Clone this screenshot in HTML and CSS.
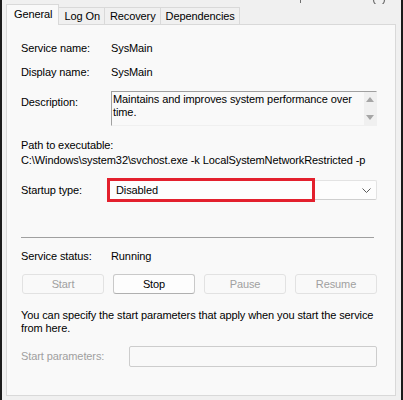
FILE: index.html
```html
<!DOCTYPE html>
<html lang="en">
<head>
    <meta charset="UTF-8">
    <title>SysMain Properties</title>
    <link rel="stylesheet" href="styles.css">
</head>
<body>
    <div class="window">
        <!-- cut off title bar buttons -->
        <svg class="chrome" width="403" height="4" viewBox="0 0 403 4">
            <path d="M300.5 0 V3" stroke="#707070" stroke-width="1" fill="none"/>
            <path d="M373.5 0 A5.5 5.5 0 0 0 384.5 0" stroke="#707070" stroke-width="1.2" fill="none"/>
        </svg>

        <div class="tabs">
            <div class="tab active">General</div>
            <div class="tab">Log On</div>
            <div class="tab">Recovery</div>
            <div class="tab">Dependencies</div>
        </div>

        <div class="panel">
            <div class="row">
                <span class="label">Service name:</span>
                <span>SysMain</span>
            </div>
            <div class="row display">
                <span class="label">Display name:</span>
                <span>SysMain</span>
            </div>
            <div class="row desc-row">
                <span class="label">Description:</span>
                <div class="desc-box">
                    <p>Maintains and improves system performance over time.</p>
                    <div class="scroll">
                        <svg width="8" height="5" viewBox="0 0 8 5"><path d="M0 5 L4 0 L8 5 Z" fill="#a6a6a6"/></svg>
                        <svg width="8" height="5" viewBox="0 0 8 5"><path d="M0 0 L4 5 L8 0 Z" fill="#a6a6a6"/></svg>
                    </div>
                </div>
            </div>

            <div class="path">
                <div>Path to executable:</div>
                <div class="path-value">C:\Windows\system32\svchost.exe -k LocalSystemNetworkRestricted -p</div>
            </div>

            <div class="row startup">
                <span class="label">Startup type:</span>
                <div class="select">
                    <span>Disabled</span>
                    <svg width="9" height="5" viewBox="0 0 9 5"><path d="M0.5 0.5 L4.5 4.5 L8.5 0.5" stroke="#5a5a5a" fill="none"/></svg>
                    <div class="highlight"></div>
                </div>
            </div>

            <div class="sep"></div>

            <div class="row status">
                <span class="label">Service status:</span>
                <span>Running</span>
            </div>

            <div class="buttons">
                <button disabled>Start</button>
                <button>Stop</button>
                <button disabled>Pause</button>
                <button disabled>Resume</button>
            </div>

            <p class="note">You can specify the start parameters that apply when you start the service from here.</p>

            <div class="row params">
                <span class="label muted">Start parameters:</span>
                <div class="input"></div>
            </div>
        </div>
    </div>
</body>
</html>
```

FILE: styles.css
```css
body {
    margin: 0;
    font-family: "Liberation Sans", Arial, sans-serif;
    font-size: 11px;
    line-height: 13px;
    letter-spacing: -0.1px;
    color: #000000;
    background-color: #f0f0f0;
}

.window {
    position: relative;
    height: 400px;
    box-sizing: border-box;
    border-left: 2px solid #1b1b1b;
    border-right: 2px solid #1b1b1b;
    background-color: #f0f0f0;
}

.chrome {
    position: absolute;
    top: 0;
    left: -2px;
}

/* tab strip */
.tabs {
    display: flex;
    align-items: flex-end;
    height: 24px;
    padding-left: 4px;
}

.tab {
    height: 17px;
    box-sizing: border-box;
    padding: 2px 4px 0 5px;
    border: 1px solid #d9d9d9;
    border-bottom: none;
    border-left: none;
    background-color: #f0f0f0;
}

.tab.active {
    position: relative;
    z-index: 1;
    height: 21px;
    margin-bottom: -1px;
    padding: 3px 6px 0 7px;
    border-left: 1px solid #d9d9d9;
    background-color: #f9f9f9;
}

.panel {
    height: 372px;
    box-sizing: border-box;
    margin: 0 5px 0 4px;
    padding: 17px 18px 0 14px;
    border: 1px solid #d9d9d9;
    background-color: #f9f9f9;
}

.row {
    display: flex;
    align-items: flex-start;
}

.label {
    flex: none;
    width: 90px;
}

.display {
    margin-top: 11px;
}

/* description */
.desc-row {
    margin-top: 12px;
}

.desc-row .label {
    margin-top: 5px;
}

.desc-box {
    flex: 1;
    display: flex;
    height: 35px;
    box-sizing: border-box;
    border-top: 1px solid #a0a0a0;
    border-left: 1px solid #a0a0a0;
    border-right: 1px solid #f0f0f0;
    border-bottom: 1px solid #f0f0f0;
    background-color: #f9f9f9;
}

.desc-box p {
    flex: 1;
    margin: 0;
    padding: 1px 0 0 1px;
}

.scroll {
    width: 12px;
    display: flex;
    flex-direction: column;
    align-items: center;
    justify-content: space-between;
    padding: 5px 0 5px 0;
    background-color: #f0f0f0;
}

.path {
    margin-top: 13px;
}

.path-value {
    margin-top: 2px;
    white-space: nowrap;
}

/* startup type */
.startup {
    margin-top: 13px;
}

.startup .label {
    margin-top: 4px;
}

.select {
    position: relative;
    flex: 1;
    display: flex;
    align-items: center;
    justify-content: space-between;
    height: 20px;
    box-sizing: border-box;
    margin-left: -3px;
    padding: 1px 5px 0 7px;
    border: 1px solid #e3e3e3;
    border-bottom-color: #cfcfcf;
    border-radius: 2px;
    background-color: #fdfdfd;
}

.highlight {
    position: absolute;
    left: -2px;
    top: -3px;
    width: 208px;
    height: 24px;
    box-sizing: border-box;
    border: 3px solid #e3202d;
}

.sep {
    height: 1px;
    margin: 37px 3px 0 0;
    background-color: #a0a0a0;
}

.status {
    margin-top: 12px;
}

/* buttons */
.buttons {
    display: grid;
    grid-template-columns: repeat(4, 1fr);
    gap: 9px;
    margin: 11px 0 0 1px;
}

button {
    height: 20px;
    padding: 0;
    font-family: inherit;
    font-size: 11px;
    letter-spacing: -0.1px;
    color: #000000;
    border: 1px solid #c9c9c9;
    border-bottom-color: #b0b0b0;
    border-radius: 3px;
    background-color: #fdfdfd;
}

button:disabled {
    color: #a0a0a0;
    border-color: #e2e2e2;
    background-color: #f9f9f9;
}

.note {
    margin: 15px 0 0 0;
}

.params {
    margin-top: 11px;
}

.params .label {
    width: 108px;
    margin-top: 4px;
}

.muted {
    color: #a0a0a0;
}

.input {
    flex: 1;
    height: 21px;
    box-sizing: border-box;
    border: 1px solid #cdcdcd;
    border-radius: 2px;
    background-color: #f9f9f9;
}
```
